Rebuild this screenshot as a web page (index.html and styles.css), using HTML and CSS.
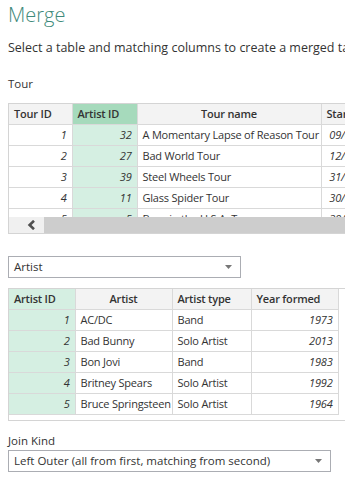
FILE: index.html
```html
<!DOCTYPE html>
<html>
<head>
<meta charset="utf-8">
<link rel="stylesheet" href="styles.css">
</head>
<body>
<div class="page">
  <h1 class="title">Merge</h1>
  <p class="desc">Select a table and matching columns to create a merged table.</p>
  <div class="label tour-label">Tour</div>

  <div class="grid grid-top">
    <div class="clip">
      <table class="tbl tbl-top">
        <colgroup><col style="width:63px"><col style="width:65px"><col style="width:184px"><col style="width:68px"></colgroup>
        <thead>
          <tr><th class="l">Tour ID</th><th class="l sel">Artist ID</th><th>Tour name</th><th class="l">Start date</th></tr>
        </thead>
        <tbody>
          <tr><td class="n">1</td><td class="n hl">32</td><td>A Momentary Lapse of Reason Tour</td><td class="n">09/09/1987</td></tr>
          <tr><td class="n">2</td><td class="n hl">27</td><td>Bad World Tour</td><td class="n">12/09/1987</td></tr>
          <tr><td class="n">3</td><td class="n hl">39</td><td>Steel Wheels Tour</td><td class="n">31/08/1989</td></tr>
          <tr><td class="n">4</td><td class="n hl">11</td><td>Glass Spider Tour</td><td class="n">30/05/1987</td></tr>
          <tr><td class="n">5</td><td class="n hl">5</td><td>Born in the U.S.A. Tour</td><td class="n">29/06/1984</td></tr>
        </tbody>
      </table>
    </div>
    <div class="scrollbar">
      <div class="sb-btn">
        <svg width="9" height="10" viewBox="0 0 9 10"><path d="M7 0.8 L2.6 5 L7 9.2" fill="none" stroke="#505050" stroke-width="2.6"/></svg>
      </div>
      <div class="sb-track"></div>
    </div>
  </div>

  <div class="select select-artist">
    <span>Artist</span>
    <svg class="caret" width="7" height="4" viewBox="0 0 7 4"><path d="M0 0 H7 L3.5 4 Z" fill="#777"/></svg>
  </div>

  <div class="grid grid-bottom">
    <table class="tbl tbl-bottom">
      <colgroup><col style="width:66px"><col style="width:97px"><col style="width:79px"><col style="width:87px"></colgroup>
      <thead>
        <tr><th class="l hl">Artist ID</th><th>Artist</th><th class="l">Artist type</th><th class="l">Year formed</th></tr>
      </thead>
      <tbody>
        <tr><td class="n hl">1</td><td>AC/DC</td><td>Band</td><td class="n">1973</td></tr>
        <tr><td class="n hl">2</td><td>Bad Bunny</td><td>Solo Artist</td><td class="n">2013</td></tr>
        <tr><td class="n hl">3</td><td>Bon Jovi</td><td>Band</td><td class="n">1983</td></tr>
        <tr><td class="n hl">4</td><td>Britney Spears</td><td>Solo Artist</td><td class="n">1992</td></tr>
        <tr><td class="n hl">5</td><td>Bruce Springsteen</td><td>Solo Artist</td><td class="n">1964</td></tr>
      </tbody>
    </table>
  </div>

  <div class="label join-label">Join Kind</div>
  <div class="select select-join">
    <span>Left Outer (all from first, matching from second)</span>
    <svg class="caret" width="7" height="4" viewBox="0 0 7 4"><path d="M0 0 H7 L3.5 4 Z" fill="#777"/></svg>
  </div>
</div>
</body>
</html>
```

FILE: styles.css
```css
html, body {
  margin: 0;
  padding: 0;
  background: #ffffff;
  overflow: hidden;
}
body {
  width: 345px;
  height: 477px;
  font-family: "Open Sans", "Noto Sans", sans-serif;
  font-size: 11px;
  color: #333333;
}
.page {
  padding: 0 0 0 8px;
  width: 500px;
}
.title {
  margin: 0;
  padding-top: 1px;
  font-size: 20px;
  font-weight: 300;
  line-height: 28px;
  color: #3f8a7b;
}
.desc {
  margin: 9px 0 0 0;
  line-height: 20px;
  white-space: nowrap;
  font-size: 12.5px;
  color: #333;
}
.label {
  line-height: 18px;
  font-size: 11.5px;
}
.tour-label {
  margin-top: 17px;
}
.grid {
  border: 1px solid #d4d4d4;
  background: #fff;
}
.grid-top {
  margin-top: 10px;
  width: 420px;
}
.clip {
  height: 113px;
  overflow: hidden;
}
.tbl {
  border-collapse: collapse;
  table-layout: fixed;
}
.tbl-top { width: 380px; }
.tbl-bottom { width: 329px; }
.tbl th, .tbl td {
  height: 20px;
  padding: 0 5px;
  border-right: 1px solid #d9d9d9;
  border-bottom: 1px solid #d9d9d9;
  white-space: nowrap;
  overflow: hidden;
  line-height: 20px;
  letter-spacing: -0.2px;
}
.tbl th {
  background: #f3f3f3;
  font-weight: 600;
  text-align: center;
}
.tbl th.l { text-align: left; }
.tbl th.sel { background: #a6dabc; }
.tbl .hl { background: #d5efe2; }
.tbl td.n {
  text-align: right;
  font-style: italic;
}
.scrollbar {
  display: flex;
  height: 16px;
}
.sb-btn {
  width: 35px;
  background: #f0f0f0;
  display: flex;
  align-items: center;
  padding-left: 18px;
  box-sizing: border-box;
}
.sb-track {
  flex: 1;
  background: #cdcdcd;
}
.select {
  border: 1px solid #abadb3;
  height: 20px;
  line-height: 20px;
  padding-left: 5px;
  padding-right: 8px;
  font-size: 11.5px;
  display: flex;
  align-items: center;
  justify-content: space-between;
}
.select-artist {
  margin-top: 22px;
  width: 218px;
}
.grid-bottom {
  margin-top: 10px;
  width: 420px;
  padding-bottom: 5px;
}
.join-label {
  margin-top: 13px;
  line-height: 14px;
}
.select-join {
  margin-top: 2px;
  width: 308px;
}
```
